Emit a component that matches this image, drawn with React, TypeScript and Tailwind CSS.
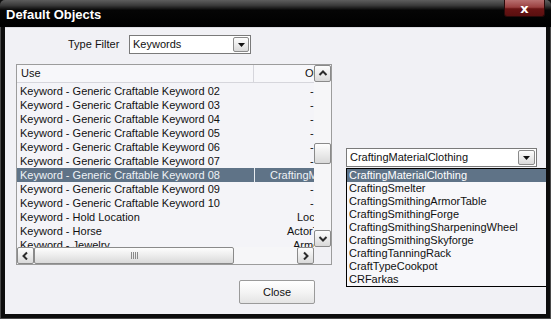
import React from "react";

const rows: { name: string; val: string; cls: string; sel?: boolean }[] = [
  { name: "Keyword - Generic Craftable Keyword 02", val: "-", cls: "pl-[56px]" },
  { name: "Keyword - Generic Craftable Keyword 03", val: "-", cls: "pl-[56px]" },
  { name: "Keyword - Generic Craftable Keyword 04", val: "-", cls: "pl-[56px]" },
  { name: "Keyword - Generic Craftable Keyword 05", val: "-", cls: "pl-[56px]" },
  { name: "Keyword - Generic Craftable Keyword 06", val: "-", cls: "pl-[56px]" },
  { name: "Keyword - Generic Craftable Keyword 07", val: "-", cls: "pl-[56px]" },
  { name: "Keyword - Generic Craftable Keyword 08", val: "CraftingMaterialClothing", cls: "pl-[15px]", sel: true },
  { name: "Keyword - Generic Craftable Keyword 09", val: "-", cls: "pl-[56px]" },
  { name: "Keyword - Generic Craftable Keyword 10", val: "-", cls: "pl-[56px]" },
  { name: "Keyword - Hold Location", val: "LocTypeHold", cls: "pl-[43px]" },
  { name: "Keyword - Horse", val: "ActorTypeHorse", cls: "pl-[33px]" },
  { name: "Keyword - Jewelry", val: "ArmorJewelry", cls: "pl-[39px]" },
];

const items = [
  "CraftingMaterialClothing",
  "CraftingSmelter",
  "CraftingSmithingArmorTable",
  "CraftingSmithingForge",
  "CraftingSmithingSharpeningWheel",
  "CraftingSmithingSkyforge",
  "CraftingTanningRack",
  "CraftTypeCookpot",
  "CRFarkas",
];

const btn =
  "border border-[#8a8a8a] rounded-[2px] bg-[linear-gradient(to_bottom,#fdfdfd_0%,#ececec_50%,#d9d9d9_100%)] flex items-center justify-center";

function Chevron({ dir }: { dir: "up" | "down" | "left" | "right" }) {
  const pts: Record<string, string> = {
    up: "1.5,6 5,2.5 8.5,6",
    down: "1.5,3 5,6.5 8.5,3",
    left: "6,1.5 2.5,5 6,8.5",
    right: "3,1.5 6.5,5 3,8.5",
  };
  return (
    <svg width="10" height="9" viewBox="0 0 10 9">
      <polyline points={pts[dir]} fill="none" stroke="#2b2b2b" strokeWidth="2" />
    </svg>
  );
}

function DropArrow() {
  return (
    <svg width="7" height="4" viewBox="0 0 7 4">
      <polygon points="0,0 7,0 3.5,4" fill="#111" />
    </svg>
  );
}

export default function App() {
  return (
    <div
      className="w-[551px] h-[319px] bg-[#0d0d0d] flex flex-col relative overflow-hidden text-[11px] leading-[13px] text-[#111]"
      style={{ fontFamily: '"Liberation Sans", Arial, sans-serif' }}
    >
      {/* title bar */}
      <div className="h-[27px] shrink-0 bg-[linear-gradient(to_bottom,#5e5e5e_0%,#3a3a3a_20%,#050505_38%,#000_100%)] flex items-center pl-[6px] rounded-t-[5px]">
        <span className="text-white font-bold text-[13px] leading-none mt-[1px]">Default Objects</span>
      </div>
      <div className="absolute right-[6px] top-0 w-[41px] h-[17px] rounded-b-[3px] border border-t-0 border-[#2a0a0a] bg-[linear-gradient(to_bottom,#b87070_0%,#9a4040_45%,#6a1414_55%,#5a1010_100%)] flex items-center justify-center">
        <span className="text-white font-bold text-[13px] leading-none" style={{ fontFamily: '"DejaVu Sans", sans-serif' }}>x</span>
      </div>

      {/* client */}
      <div className="flex-1 flex px-[4px] pb-[4px] border-l border-r border-b border-[#4a4a4a]">
        <div className="flex-1 bg-[#f1f1f5] border-t border-[#dcdce2] relative overflow-hidden flex flex-col">
          {/* type filter row */}
          <div className="mt-[7px] h-[19px] flex items-center pl-[63px]">
            <span className="w-[61px]">Type Filter</span>
            <div className="w-[122px] h-[19px] bg-white border border-[#7a7a7a] flex items-center pl-[3px] pr-[1px]">
              <span className="flex-1">Keywords</span>
              <div className={`${btn} w-[16px] h-[15px]`}>
                <DropArrow />
              </div>
            </div>
          </div>

          {/* list row */}
          <div className="mt-[10px] flex items-start">
            <div className="ml-[11px] w-[316px] h-[201px] border border-[#9c9c9c] bg-[#f4f4f8] grid grid-cols-[297px_17px] grid-rows-[182px_17px]">
              {/* content */}
              <div className="overflow-hidden flex flex-col">
                <div className="h-[18px] shrink-0 flex border-b border-[#d6d6dc] bg-[#f7f7fa]">
                  <div className="w-[237px] border-r border-[#d6d6dc] pl-[4px] flex items-center">Use</div>
                  <div className="flex-1 overflow-hidden flex items-center whitespace-nowrap pl-[51px]">Object</div>
                </div>
                <div className="pt-[1px] flex flex-col">
                  {rows.map((r) => (
                    <div
                      key={r.name}
                      className={`h-[14px] leading-[14px] shrink-0 flex items-center whitespace-nowrap ${r.sel ? "bg-[#5f7387] text-[#eef2f6]" : ""}`}
                    >
                      <div className="w-[237px] pl-[3px] overflow-hidden">{r.name}</div>
                      <div className={`flex-1 h-full flex items-center overflow-hidden ${r.cls} ${r.sel ? "border-l border-[#e8ecf0]" : ""}`}>
                        {r.val}
                      </div>
                    </div>
                  ))}
                </div>
              </div>
              {/* vertical scrollbar */}
              <div className="flex flex-col bg-[#f6f6f8]">
                <div className={`${btn} h-[17px]`}>
                  <Chevron dir="up" />
                </div>
                <div className="h-[61px]" />
                <div className={`${btn} h-[21px]`} />
                <div className="flex-1" />
                <div className={`${btn} h-[17px]`}>
                  <Chevron dir="down" />
                </div>
              </div>
              {/* horizontal scrollbar */}
              <div className="flex bg-[#f6f6f8]">
                <div className={`${btn} w-[17px]`}>
                  <Chevron dir="left" />
                </div>
                <div className={`${btn} w-[200px] gap-[1px]`}>
                  <div className="w-[1px] h-[7px] bg-[#8a8a8a]" />
                  <div className="w-[1px] h-[7px] bg-[#8a8a8a]" />
                  <div className="w-[1px] h-[7px] bg-[#8a8a8a]" />
                  <div className="w-[1px] h-[7px] bg-[#8a8a8a]" />
                </div>
                <div className="flex-1" />
                <div className={`${btn} w-[17px]`}>
                  <Chevron dir="right" />
                </div>
              </div>
              <div className="bg-[#f1f1f5]" />
            </div>

            {/* combobox */}
            <div className="ml-[14px] mt-[84px] relative">
              <div className="w-[191px] h-[19px] bg-white border border-[#7a7a7a] flex items-center pl-[3px] pr-[1px]">
                <span className="flex-1">CraftingMaterialClothing</span>
                <div className={`${btn} w-[17px] h-[15px]`}>
                  <DropArrow />
                </div>
              </div>
              <div className="absolute top-[20px] left-0 w-[202px] h-[119px] border border-black bg-[#f7f7fa] flex flex-col">
                {items.map((it, i) => (
                  <div
                    key={it}
                    className={`h-[13px] leading-[13px] shrink-0 pl-[2px] whitespace-nowrap ${i === 0 ? "bg-[#5f7387] text-white" : ""}`}
                  >
                    {it}
                  </div>
                ))}
              </div>
            </div>
          </div>

          {/* close button */}
          <div className="mt-[15px] pl-[234px]">
            <div className="w-[76px] h-[24px] border border-[#9a9a9a] rounded-[2px] bg-[linear-gradient(to_bottom,#ffffff_0%,#f4f4f4_50%,#e4e4e4_100%)] flex items-center justify-center">
              Close
            </div>
          </div>
        </div>
      </div>
    </div>
  );
}
